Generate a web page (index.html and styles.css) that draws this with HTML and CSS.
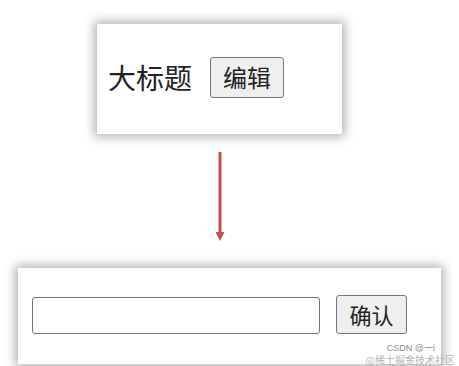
FILE: index.html
```html
<!DOCTYPE html>
<html lang="zh-CN">
<head>
    <meta charset="UTF-8">
    <meta name="viewport" content="width=device-width, initial-scale=1.0">
    <title>编辑标题</title>
    <link rel="stylesheet" href="styles.css">
</head>
<body>
    <!-- View mode -->
    <div class="card card-view">
        <span class="title">大标题</span>
        <button class="btn btn-edit">编辑</button>
    </div>

    <!-- Arrow -->
    <div class="arrow">
        <svg width="12" height="90" viewBox="0 0 12 90">
            <line x1="6" y1="0" x2="6" y2="82" stroke="#c0504d" stroke-width="3"/>
            <polygon points="1.5,80 10.5,80 6,89" fill="#c0504d"/>
        </svg>
    </div>

    <!-- Edit mode -->
    <div class="card card-edit">
        <input class="field" type="text">
        <button class="btn btn-ok">确认</button>
    </div>

    <div class="watermark">
        <span class="wm-front">CSDN @一i</span>
        <span class="wm-back">@稀土掘金技术社区</span>
    </div>
</body>
</html>
```

FILE: styles.css
```css
/* General */
body {
    margin: 0;
    padding: 0;
    background: #fff;
    font-family: "Noto Sans CJK SC", "Liberation Sans", sans-serif;
    color: #222;
    height: 366px;
    overflow: hidden;
    position: relative;
}

/* Cards */
.card {
    background: #fff;
    box-shadow: 0 0 10px 3px rgba(0, 0, 0, 0.3);
    display: flex;
    align-items: center;
    box-sizing: border-box;
}

.card-view {
    margin: 24px 0 0 97px;
    width: 245px;
    height: 110px;
    padding: 0 0 4px 11px;
}

.title {
    font-size: 28px;
    line-height: 1;
}

.card-edit {
    margin: 26px 0 0 18px;
    width: 423px;
    height: 96px;
    padding: 0 0 0 14px;
}

/* Buttons */
.btn {
    font-family: "Noto Sans CJK SC", sans-serif;
    background: #efefef;
    border: 1px solid #767676;
    border-radius: 3px;
    color: #222;
    padding: 0;
    line-height: 1;
}

.btn-edit {
    margin-left: 18px;
    width: 74px;
    height: 41px;
    font-size: 24px;
}

.btn-ok {
    margin: 0 0 4px 16px;
    width: 71px;
    height: 39px;
    font-size: 22px;
}

.field {
    width: 288px;
    height: 37px;
    box-sizing: border-box;
    border: 1px solid #767676;
    border-radius: 3px;
    margin: 0 0 2px 0;
}

/* Arrow */
.arrow {
    margin: 18px 0 0 214px;
    height: 90px;
}

.arrow svg {
    display: block;
}

/* Watermark */
.watermark {
    position: absolute;
    right: 4px;
    bottom: 1px;
    display: flex;
    flex-direction: column;
    align-items: flex-end;
    gap: 2px;
    line-height: 1;
}

.wm-front {
    font-family: "Liberation Sans", sans-serif;
    font-size: 9px;
    color: #8a8a8a;
    margin-right: 20px;
    white-space: nowrap;
}

.wm-back {
    font-size: 10px;
    color: #b5b5b5;
    white-space: nowrap;
}
```
